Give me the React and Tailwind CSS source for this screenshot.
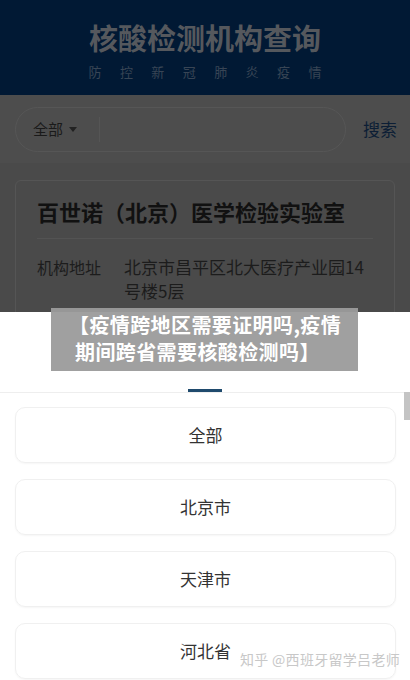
import React from "react";

const cities = ["全部", "北京市", "天津市", "河北省"];

export default function App() {
  return (
    <div
      className="relative w-[410px] h-[680px] overflow-hidden bg-[#4a4a4a]"
      style={{ fontFamily: '"Noto Sans CJK SC", "Noto Sans", sans-serif' }}
    >
      {/* page behind the dim overlay */}
      <header className="h-[95px] bg-[#011934] flex flex-col items-center pt-[20px]">
        <h1 className="text-[29px] leading-[34px] font-bold text-[#55585d]">
          核酸检测机构查询
        </h1>
        <div className="mt-[10px] w-[233px] flex justify-between text-[13px] leading-[16px] text-[#384555]">
          {"防控新冠肺炎疫情".split("").map((c) => (
            <span key={c}>{c}</span>
          ))}
        </div>
      </header>

      <div className="h-[68px] bg-[#4d4d4d] flex items-center pl-[15px] pr-[13px] gap-[17px]">
        <div className="flex-1 h-[45px] rounded-full border border-[#565656] flex items-center pl-[17px]">
          <span className="text-[15px] text-[#1a1a1a]">全部</span>
          <span className="ml-[6px] w-0 h-0 border-l-[4px] border-r-[4px] border-t-[5px] border-l-transparent border-r-transparent border-t-[#222]" />
          <span className="ml-[22px] w-px h-[25px] bg-[#555]" />
        </div>
        <span className="text-[17px] text-[#0c1e35]">搜索</span>
      </div>

      <div className="px-[15px] pt-[17px]">
        <div className="rounded-md border border-[#555] px-[21px] pt-[14px] pb-[20px]">
          <h2 className="text-[22px] leading-[32px] font-bold text-[#111]">
            百世诺（北京）医学检验实验室
          </h2>
          <div className="mt-[11px] h-px bg-[#535353]" />
          <div className="mt-[16px] flex text-[16px] leading-[24px] text-[#1c1c1c]">
            <span className="w-[87px] shrink-0">机构地址</span>
            <span className="text-[17px]">北京市昌平区北大医疗产业园14号楼5层</span>
          </div>
        </div>
      </div>

      {/* bottom sheet */}
      <div className="absolute left-0 right-0 top-[312px] bottom-0 bg-white">
        <div className="h-[80px] flex items-end justify-center">
          <div className="w-[34px] h-[3px] bg-[#1f4a6d]" />
        </div>
        <div className="h-px bg-[#eeeeee]" />
        <div className="flex flex-col gap-[16px] pl-[15px] pr-[14px] pt-[14px]">
          {cities.map((c) => (
            <div
              key={c}
              className="h-[56px] rounded-[10px] border border-[#f0f0f0] shadow-[0_1px_2px_rgba(0,0,0,0.04)] flex items-center justify-center text-[17px] text-[#333]"
            >
              {c}
            </div>
          ))}
        </div>
        <div className="absolute right-0 top-[80px] w-[6px] h-[28px] bg-[#c4c4c4]" />
      </div>

      {/* watermark title */}
      <div className="absolute left-[51px] top-[308px] w-[307px] h-[63px] bg-[#9b9b9b]/95 pl-[18px] pt-[3px]">
        <p className="text-[20px] leading-[27px] font-bold text-white tracking-[0.4px]">
          【疫情跨地区需要证明吗,疫情
          <br />
          <span className="pl-[6px]">期间跨省需要核酸检测吗】</span>
        </p>
      </div>

      <div className="absolute right-[10px] bottom-[12px] text-[14px] leading-[18px] text-[#c8c8c8] tracking-[0.3px]">
        知乎 @西班牙留学吕老师
      </div>
    </div>
  );
}
